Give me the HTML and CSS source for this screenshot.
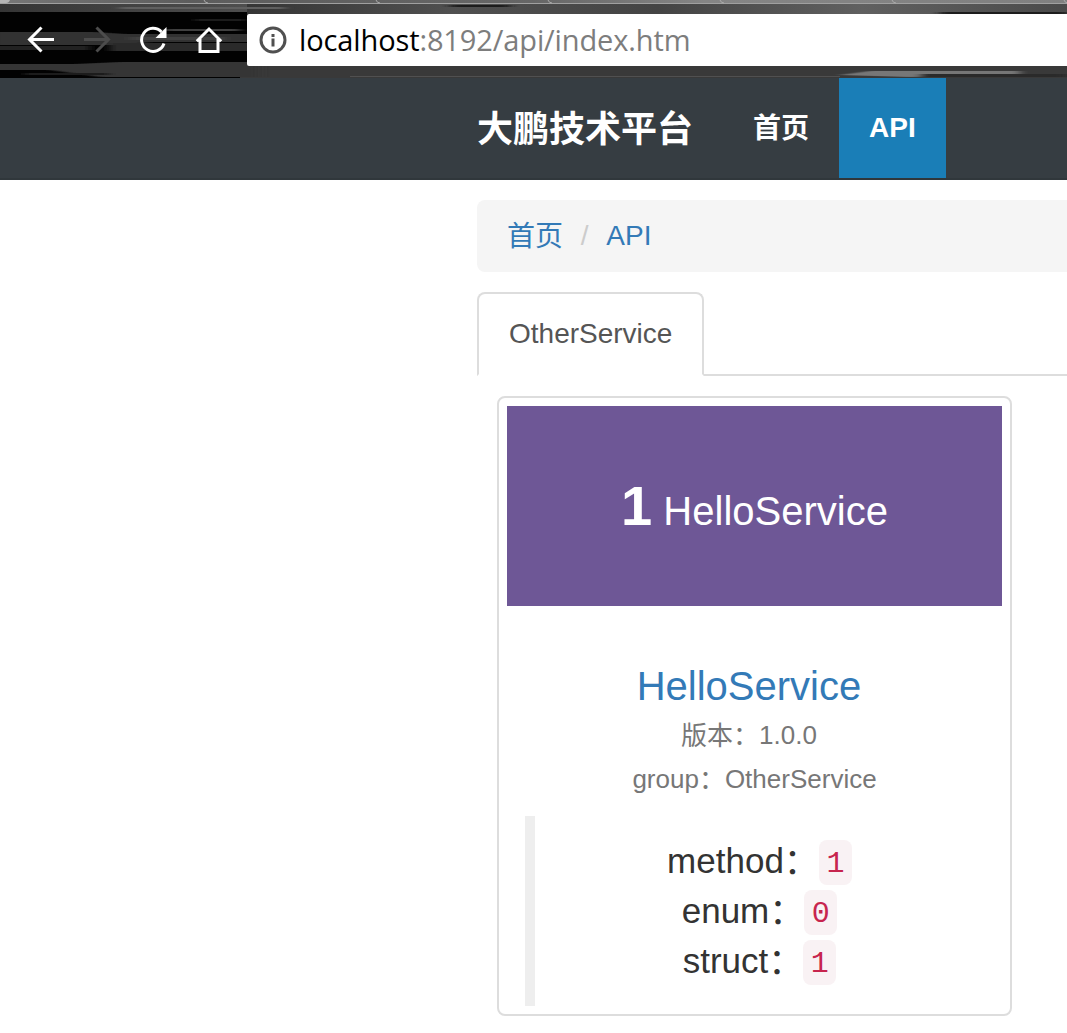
FILE: index.html
```html
<!DOCTYPE html>
<html lang="zh">
<head>
<meta charset="utf-8">
<title>API</title>
<link rel="stylesheet" href="styles.css">
</head>
<body>
<header class="browser">
  <svg class="theme" width="1067" height="78" viewBox="0 0 1067 78" aria-hidden="true">
    <defs>
      <filter id="soft" x="-5%" y="-50%" width="110%" height="200%"><feGaussianBlur stdDeviation="5 0.6"/></filter>
      <linearGradient id="tabs"><stop offset="0" stop-color="#777"/><stop offset=".18" stop-color="#5d5d5d"/><stop offset=".5" stop-color="#666"/><stop offset=".66" stop-color="#858585"/><stop offset="1" stop-color="#808080"/></linearGradient>
      <linearGradient id="upper"><stop offset="0" stop-color="#353535"/><stop offset=".25" stop-color="#505050"/><stop offset=".5" stop-color="#444"/><stop offset=".75" stop-color="#606060"/><stop offset="1" stop-color="#4a4a4a"/></linearGradient>
    </defs>
    <rect width="1067" height="78" fill="#020202"/>
    <rect y="4" width="1067" height="8" fill="url(#upper)"/>
    <rect x="247" y="4" width="820" height="10" fill="url(#upper)"/>
    <rect x="240" y="66" width="827" height="12" fill="#393939"/>
    <g filter="url(#soft)">
      <path d="M-10 32H95L125 34H260V42H150L120 45H-10Z" fill="#333"/>
      <path d="M-10 46H90V50H-10Z" fill="#222"/>
      <path d="M130 37H225V40H130ZM165 29H240V31H165Z" fill="#404040"/>
      <path d="M110 43H260V51H110Z" fill="#2c2c2c"/>
      <path d="M-10 64H75L120 62H260V77H100L50 70H-10Z" fill="#343434"/>
      <path d="M25 73H110V75H25ZM195 19H245V21H195Z" fill="#1c1c1c"/>
      <path d="M120 7H285V9H120Z" fill="#606060"/>
      <path d="M450 5H510V7H450ZM940 12H1067V14H940Z" fill="#1d1d1d"/>
      <path d="M840 75L870 71H1020V74L910 77Z" fill="#777"/>
      <path d="M920 74H1067V77H920Z" fill="#2c2c2c"/>
    </g>
    <rect width="1067" height="3" fill="url(#tabs)"/>
    <rect y="3" width="1067" height="1" fill="#a0a0a0"/>
    <path d="M0 0H10Q9 3 6 3H0Z" fill="#b5b5b5"/>
    <path d="M204 0q1 3 4 3M376 0q1 3 4 3M548 0q1 3 4 3M720 0q1 3 4 3M892 0q1 3 4 3M1064 0q1 3 4 3" fill="none" stroke="#aaa"/>
    <rect x="350" y="76" width="490" height="1" fill="#505050"/>
  </svg>
  <nav class="controls">
    <svg class="icon" viewBox="0 0 28 28"><path d="M27 13.500H3M14.500 1.500L2.500 13.500l12 12"/></svg>
    <svg class="icon dim" viewBox="0 0 28 28"><path d="M1 13.500h24M13.500 1.500L25.500 13.500l-12 12"/></svg>
    <svg class="icon" viewBox="0 0 28 28"><path d="M22.500 6A11.500 11.500 0 1 0 25 17.500"/><path class="solid" d="M27.500 1v11H16.500z"/></svg>
    <svg class="icon" viewBox="0 0 28 28"><path d="M1.800 15.200L14 3l12.200 12.200M5 13V25.500h18V13"/></svg>
  </nav>
  <div class="address">
    <svg class="info" viewBox="0 0 28 28"><circle cx="14" cy="14" r="12"/><path d="M14 12.500v8M14 8v3"/></svg>
    <span class="url"><b>localhost</b>:8192/api/index.htm</span>
  </div>
</header>
<nav class="navbar">
  <a class="brand"><span class="cjk">大鹏技术平台</span></a>
  <a class="nav-link"><span class="cjk">首页</span></a>
  <a class="nav-link active">API</a>
</nav>
<main class="container">
  <ol class="breadcrumb"><li><span class="cjk">首页</span></li> <li>API</li></ol>
  <div class="tabs"><a class="tab">OtherService</a></div>
  <section class="card">
    <div class="banner"><span><b>1</b> HelloService</span></div>
    <div class="caption">
      <h3>HelloService&nbsp;</h3>
      <p class="version"><span class="cjk">版本：</span>1.0.0</p>
      <p>group<span class="cjk">：</span>OtherService</p>
      <div class="stats">
        <div>method<span class="cjk">：</span><code>1</code></div>
        <div>enum<span class="cjk">：</span><code>0</code></div>
        <div>struct<span class="cjk">：</span><code>1</code></div>
      </div>
    </div>
  </section>
</main>
</body>
</html>
```

FILE: styles.css
```css
* { box-sizing: border-box; }
body {
  margin: 0;
  height: 1033px;
  overflow: hidden;
  background: #fff;
  color: #333;
  font: 28px/40px "Liberation Sans", "Noto Sans CJK SC", sans-serif;
}
.cjk { line-height: 1; vertical-align: -1px; }
.browser {
  position: relative;
  display: flex;
  height: 78px;
  padding-top: 14px;
}
.theme { position: absolute; left: 0; top: 0; }
.controls {
  position: relative;
  display: flex;
  gap: 28px;
  width: 247px;
  padding: 12px 0 0 27px;
}
.icon { width: 28px; height: 28px; fill: none; stroke: #fff; stroke-width: 3; }
.icon .solid { fill: #fff; stroke: none; }
.icon.dim { stroke: #4c4c4c; }
.address {
  position: relative;
  display: flex;
  align-items: center;
  gap: 12px;
  flex: 1;
  height: 52px;
  padding-left: 12px;
  background: #fff;
  border-radius: 2px 0 0 2px;
}
.info { width: 28px; height: 28px; fill: none; stroke: #505050; stroke-width: 3; }
.url {
  color: #7d7d7d;
  font: 29px/50px "Open Sans", sans-serif;
  letter-spacing: -0.12px;
  white-space: nowrap;
  padding-bottom: 1px;
}
.url b { color: #000; font-weight: 400; }
.navbar {
  display: flex;
  height: 102px;
  padding-left: 477px;
  background: #363d42;
  border-bottom: 2px solid #30373b;
  color: #fff;
  font-weight: 700;
  line-height: 100px;
}
.brand { padding-right: 30px; font-size: 36px; }
.brand .cjk { vertical-align: -2px; }
.nav-link { padding: 0 30px; }
.active { background: #1a7eb7; }
.container { padding: 20px 0 0 477px; }
.breadcrumb {
  margin: 0 0 20px;
  padding: 16px 30px;
  height: 72px;
  background: #f5f5f5;
  border-radius: 8px 0 0 8px;
  list-style: none;
  color: #337ab7;
}
.breadcrumb li { display: inline-block; }
.breadcrumb li + li::before { content: "/\00a0"; padding: 0 10px; color: #ccc; }
.tabs { display: flex; height: 84px; border-bottom: 2px solid #ddd; }
.tab {
  height: 84px;
  padding: 20px 30px;
  background: #fff;
  border: 2px solid #ddd;
  border-bottom-color: #fff;
  border-radius: 8px 8px 0 0;
  color: #555;
}
.card {
  width: 515px;
  height: 620px;
  margin: 20px 0 0 20px;
  padding: 8px;
  border: 2px solid #ddd;
  border-radius: 8px;
  text-align: center;
}
.banner {
  height: 200px;
  background: #6e5796;
  color: #fff;
  font-size: 40px;
  line-height: 200px;
}
.banner b { font-size: 56px; }
.caption { padding: 58px 18px 0; }
.caption h3 { margin: 0 0 5px; color: #337ab7; font-size: 40px; font-weight: 400; line-height: 44px; }
.caption p { height: 44px; margin: 0; color: #777; font-size: 26px; line-height: 44px; }
.caption .version { padding-right: 11px; }
.stats {
  height: 190px;
  margin-top: 15px;
  padding: 20px 0;
  border-left: 10px solid #eee;
  font-size: 35px;
  line-height: 50px;
}
.stats div { display: flex; justify-content: center; height: 50px; }
.stats .cjk { padding-top: 8px; }
.stats code {
  height: 45px;
  margin-top: 4px;
  padding: 0 7.500px;
  background: #f9f2f4;
  border-radius: 8px;
  color: #c7254e;
  font: 30px/49px "Liberation Mono", monospace;
}
```
